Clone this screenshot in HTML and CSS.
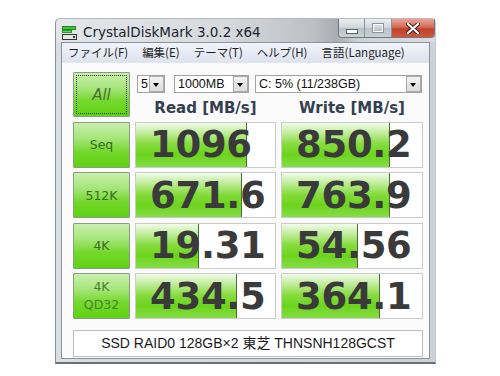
FILE: index.html
```html
<!DOCTYPE html>
<html lang="ja">
<head>
<meta charset="utf-8">
<title>CrystalDiskMark 3.0.2 x64</title>
<link rel="stylesheet" href="styles.css">
</head>
<body>
<div class="window">
  <div class="titlebar">
    <svg class="appicon" width="15" height="14" viewBox="0 0 15 14">
      <rect x="0.5" y="0.5" width="13" height="3" fill="#3cc83c" stroke="#1f8a1f"/>
      <rect x="0.5" y="4.5" width="9" height="2" fill="#5ad65a" stroke="#2a9a2a"/>
      <rect x="0.5" y="8.5" width="14" height="5" fill="#e6e6e6" stroke="#333"/>
      <rect x="11" y="10" width="2" height="2" fill="#333"/>
    </svg>
    <span class="title">CrystalDiskMark 3.0.2 x64</span>
    <div class="controls">
      <div class="cbtn min"><span class="minbar"></span></div>
      <div class="cbtn max"><span class="maxbox"></span></div>
      <div class="cbtn close">
        <svg width="14" height="11" viewBox="0 0 14 11">
          <path d="M2 1 L12 10 M12 1 L2 10" stroke="#3a1a14" stroke-width="4" stroke-linecap="square"/>
          <path d="M2 1 L12 10 M12 1 L2 10" stroke="#ffffff" stroke-width="2.2" stroke-linecap="square"/>
        </svg>
      </div>
    </div>
  </div>
  <div class="body">
    <div class="menubar">
      <span class="mi">ファイル(F)</span>
      <span class="mi">編集(E)</span>
      <span class="mi">テーマ(T)</span>
      <span class="mi">ヘルプ(H)</span>
      <span class="mi">言語(Language)</span>
    </div>
    <div class="client">
      <div class="grid">
        <div class="btn all"><span class="focus">All</span></div>
        <div class="top">
          <div class="selects">
            <div class="select s1"><span class="val">5</span><span class="arrow"></span></div>
            <div class="select s2"><span class="val">1000MB</span><span class="arrow"></span></div>
            <div class="select s3"><span class="val">C: 5% (11/238GB)</span><span class="arrow"></span></div>
          </div>
          <div class="heads">
            <div class="head">Read [MB/s]</div>
            <div class="head">Write [MB/s]</div>
          </div>
        </div>

        <div class="btn">Seq</div>
        <div class="val-box"><div class="fill" style="width:80%"></div><div class="num">1096</div></div>
        <div class="val-box"><div class="fill" style="width:77%"></div><div class="num">850.2</div></div>

        <div class="btn">512K</div>
        <div class="val-box"><div class="fill" style="width:76%"></div><div class="num">671.6</div></div>
        <div class="val-box"><div class="fill" style="width:77%"></div><div class="num">763.9</div></div>

        <div class="btn">4K</div>
        <div class="val-box"><div class="fill" style="width:45%"></div><div class="num">19.31</div></div>
        <div class="val-box"><div class="fill" style="width:54%"></div><div class="num">54.56</div></div>

        <div class="btn two">4K<br>QD32</div>
        <div class="val-box"><div class="fill" style="width:73%"></div><div class="num">434.5</div></div>
        <div class="val-box"><div class="fill" style="width:70%"></div><div class="num">364.1</div></div>
      </div>
      <div class="comment">SSD RAID0 128GB×2 東芝 THNSNH128GCST</div>
    </div>
  </div>
</div>
</body>
</html>
```
FILE: styles.css
```css
html, body {
  margin: 0;
  padding: 0;
  background: #ffffff;
}
body {
  font-family: "Liberation Sans", "Noto Sans CJK JP", sans-serif;
}
.window {
  margin: 18px 0 0 55px;
  width: 381px;
  height: 346px;
  box-sizing: border-box;
  display: flex;
  flex-direction: column;
  background: linear-gradient(90deg, #d9dee4 0%, #ccd2d9 100%);
  border: 1px solid #8e959c;
  border-top-color: #b4bac0;
  border-right-color: #c5cbd1;
  border-bottom: 2px solid #6b7077;
  border-radius: 5px 5px 0 0;
}
.titlebar {
  height: 23px;
  display: flex;
  align-items: center;
  position: relative;
  background: linear-gradient(90deg, #e4e7ea 0%, #d6dadd 45%, #bcc0c4 68%, #a9adb1 74%, #cfd3d7 80%, #d9dde1 100%);
  border-radius: 5px 5px 0 0;
}
.appicon {
  margin-left: 6px;
  margin-top: 4px;
}
.title {
  margin-left: 6px;
  margin-top: 2px;
  font-family: "DejaVu Sans", sans-serif;
  font-size: 13.5px;
  color: #1c2430;
}
.controls {
  position: absolute;
  right: 0;
  top: 0;
  display: flex;
  height: 18px;
  border: 1px solid #6e757d;
  border-top: none;
  border-radius: 0 0 4px 4px;
  overflow: hidden;
}
.cbtn {
  height: 18px;
  display: flex;
  align-items: center;
  justify-content: center;
  box-sizing: border-box;
}
.min, .max {
  width: 26px;
  background: linear-gradient(#e9edf1 0%, #d2d9df 45%, #b9c2ca 55%, #c9d1d8 100%);
  border-right: 1px solid #8c949b;
}
.max { width: 27px; }
.minbar {
  width: 10px;
  height: 3px;
  background: #ffffff;
  border: 1px solid #5a626a;
  margin-top: 6px;
}
.maxbox {
  width: 8px;
  height: 6px;
  border: 1px solid #ffffff;
  outline: 1px solid #8a939b;
}
.close {
  width: 42px;
  background: linear-gradient(#e8a596 0%, #d56b55 45%, #c0412b 55%, #d4553c 100%);
}
.body {
  flex: 1;
  display: flex;
  flex-direction: column;
  margin: 0 5px 3px 5px;
  border: 1px solid #8a929a;
  background: #ffffff;
}
.menubar {
  height: 19px;
  display: flex;
  align-items: center;
  padding-left: 0;
  background: linear-gradient(#f2f4fa 0%, #e7ebf5 50%, #dde3ef 100%);
  border-bottom: 1px solid #e3e6ec;
}
.mi {
  font-family: "Noto Sans CJK JP", sans-serif;
  font-size: 11.5px;
  color: #1e1e1e;
  padding: 0 7px;
  line-height: 19px;
  white-space: nowrap;
}
.mi:first-child { padding-left: 6px; }
.client {
  flex: 1;
  padding: 9px 0 0 11px;
  background: #fbfbfb;
}
.grid {
  display: grid;
  grid-template-columns: 57px 141px 142px;
  grid-template-rows: 45px 46px 46px 46px 46px;
  column-gap: 5px;
  row-gap: 4.5px;
}
.btn {
  box-sizing: border-box;
  border: 1px solid #8d9a86;
  border-radius: 1px;
  background: linear-gradient(#c9f0ad 0%, #a6e57a 35%, #74d82c 65%, #5fd212 100%);
  display: flex;
  align-items: center;
  justify-content: center;
  text-align: center;
  font-family: "DejaVu Sans", sans-serif;
  font-size: 12.5px;
  color: #3a6a20;
}
.btn.two {
  line-height: 18px;
  font-size: 12.5px;
  color: #4a7f2c;
}
.btn.all {
  padding: 2px;
  font-size: 15px;
  color: #4d6e3a;
}
.btn.all .focus {
  width: 100%;
  height: 100%;
  box-sizing: border-box;
  border: 1px dotted #2a3a22;
  display: flex;
  align-items: center;
  justify-content: center;
  font-style: italic;
}
.top {
  grid-column: 2 / 4;
  display: flex;
  flex-direction: column;
}
.selects {
  display: flex;
  margin-top: 3px;
  padding-left: 2px;
  height: 18px;
}
.select {
  box-sizing: border-box;
  height: 18px;
  border: 1px solid #a3a3a3;
  background: #ffffff;
  display: flex;
  align-items: stretch;
  justify-content: space-between;
  font-family: "Liberation Sans", sans-serif;
  font-size: 12.5px;
  color: #111;
}
.select .val {
  padding-left: 3px;
  line-height: 16px;
}
.select .arrow {
  width: 15px;
  box-sizing: border-box;
  border: 1px solid #a9a9a9;
  background: linear-gradient(#f4f4f4, #dcdcdc);
  position: relative;
  margin: 0;
}
.select .arrow::after {
  content: "";
  position: absolute;
  left: 3px;
  top: 6px;
  border-left: 3.5px solid transparent;
  border-right: 3.5px solid transparent;
  border-top: 4px solid #000;
}
.s1 { width: 28px; }
.s2 { width: 75px; margin-left: 9px; }
.s3 { width: 167px; margin-left: 6px; }
.heads {
  display: grid;
  grid-template-columns: 141px 142px;
  column-gap: 5px;
  flex: 1;
}
.head {
  text-align: center;
  font-family: "DejaVu Sans", sans-serif;
  font-weight: bold;
  font-size: 15px;
  color: #34404f;
  padding-top: 6px;
}
.val-box {
  box-sizing: border-box;
  border: 1px solid #cbcbcb;
  background: #ffffff;
  display: grid;
  grid-template-columns: 100%;
  grid-template-rows: 100%;
}
.fill {
  grid-area: 1 / 1;
  box-sizing: border-box;
  height: 100%;
  background: linear-gradient(#f2fbea 0%, #c2ed9e 22%, #86dc3e 48%, #6cd41c 72%, #86dd46 100%);
  border-right: 1px solid #4e6a3a;
}
.num {
  grid-area: 1 / 1;
  align-self: center;
  padding-left: 14px;
  font-family: "DejaVu Sans", sans-serif;
  font-weight: bold;
  font-size: 37px;
  line-height: 1;
  color: #3a3a3a;
  letter-spacing: -0.3px;
}
.comment {
  margin-top: 11px;
  width: 350px;
  height: 27px;
  box-sizing: border-box;
  border: 1px solid #bdbdbd;
  background: #ffffff;
  text-align: center;
  font-family: "Liberation Sans", "Noto Sans CJK JP", sans-serif;
  font-size: 14px;
  line-height: 25px;
  color: #1a1a1a;
}
```
